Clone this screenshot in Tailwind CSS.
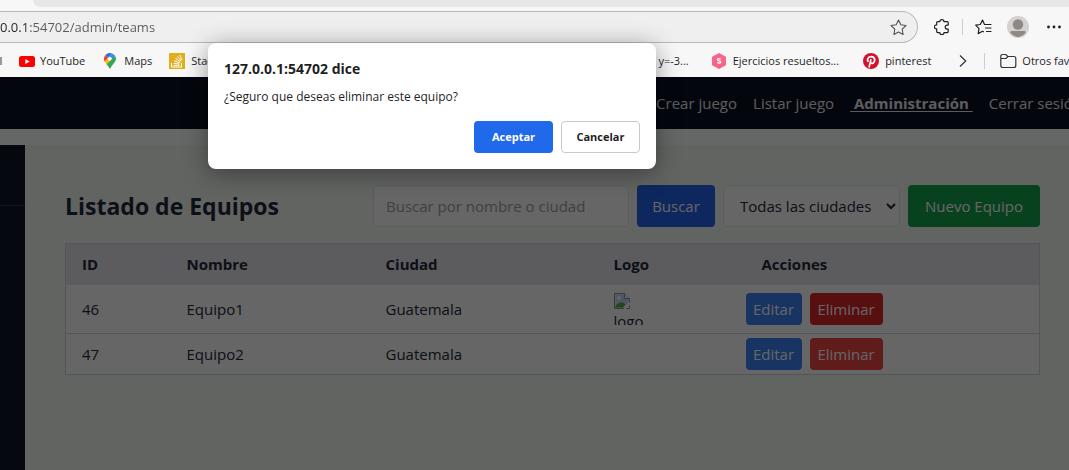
<!DOCTYPE html>
<html lang="es">
<head>
<meta charset="utf-8">
<meta name="viewport" content="width=device-width, initial-scale=1">
<title>Listado de Equipos</title>
<script src="https://cdn.jsdelivr.net/npm/@tailwindcss/browser@4"></script>
</head>
<body class="relative flex h-screen flex-col overflow-hidden bg-[#f7f7f7] font-['Open_Sans','Noto_Sans',sans-serif] text-[15px] leading-6">

<!-- Browser chrome -->
<header class="shrink-0 text-[#1f1f1f]">
  <div class="ml-[33px] h-[7px] rounded-bl-lg bg-[#e7e7e7]"></div>
  <div class="mt-1 flex h-8 items-center">
    <div class="flex h-8 grow items-center rounded-r-full border border-l-0 border-[#b9b9b9] bg-[#efefef] pr-2.5">
      <input aria-label="Dirección" value="0.0.1:54702/admin/teams" class="min-w-0 grow bg-[linear-gradient(to_right,#222_26px,#5a5a5a_26px)] bg-clip-text text-[13px] text-transparent outline-none">
      <button aria-label="Añadir a favoritos" class="text-[#555]">
        <svg class="size-[17px]" viewBox="0 0 17 17" fill="none" stroke="currentColor" stroke-width="1.1" stroke-linejoin="round"><path d="M8.5 1l2.3 4.800 5.200.7-3.800 3.700.9 5.300-4.600-2.500-4.600 2.500.9-5.300L1 6.500l5.200-.7z"/></svg>
      </button>
    </div>
    <div class="flex items-center pl-4 pr-2">
      <button aria-label="Extensiones"><svg class="size-4" viewBox="0 0 16 16" fill="none" stroke="currentColor" stroke-width="1.2" stroke-linejoin="round"><path d="M3.700 2.600h2.200a2 2 0 0 1 4 0h3.300q1 0 1 1v2.500h-1a2 2 0 0 0 0 4h1v2.500q0 1-1 1H10a2 2 0 0 1-4.200 0H3.700q-1 0-1-1v-2.700h-.3a2 2 0 0 1 0-4h.3V3.600q0-1 1-1"/></svg></button>
      <span class="ml-3 mr-3 h-4 w-px bg-[#ccc]"></span>
      <button aria-label="Favoritos"><svg class="h-4 w-[17px]" viewBox="0 0 17 16" fill="none" stroke="currentColor" stroke-width="1.2" stroke-linejoin="round" stroke-linecap="round"><path d="M10 5.500H9.500L7.500 1 5.300 5.500.7 6.200l3.300 3.400-.8 5 4.300-2.300 1 .5M10.500 5.500H16M10.500 9H16M11.500 12.500H16"/></svg></button>
      <button aria-label="Perfil" class="ml-[15px]"><svg class="size-[22px]" viewBox="0 0 22 22"><circle cx="11" cy="11" r="11" fill="#d4d1ce"/><circle cx="11" cy="8.500" r="5.200" fill="#8d8986"/><path d="M3.200 16.500q0-1.500 1.500-1.500h12.600q1.500 0 1.500 1.500A11 11 0 0 1 11 21a11 11 0 0 1-7.800-4.500" fill="#8d8986"/></svg></button>
      <button aria-label="Más opciones" class="ml-[18px]"><svg class="h-4 w-3.5" viewBox="0 0 14 16"><g fill="currentColor"><circle cx="1.500" cy="8" r="1.400"/><circle cx="7" cy="8" r="1.400"/><circle cx="12.500" cy="8" r="1.400"/></g></svg></button>
    </div>
  </div>
  <nav aria-label="Marcadores" class="flex h-[34px] items-center overflow-hidden whitespace-nowrap pt-0.5 text-[11px]">
    <span class="mr-[17px] h-2 w-0.5 bg-[#999]"></span>
    <a href="#" class="flex items-center gap-[5px]"><svg class="h-[11px] w-4" viewBox="0 0 16 11"><rect width="16" height="11" rx="2.500" fill="#f00"/><path d="M6.300 3v5l4.400-2.500z" fill="#fff"/></svg>YouTube</a>
    <a href="#" class="ml-[19px] flex items-center gap-2"><svg class="h-4 w-3" viewBox="0 0 12 16"><path d="M6 0a6 6 0 0 0-4.600 2.100L4.300 4.600 8 .4A6 6 0 0 0 6 0" fill="#1a73e8"/><path d="M1.400 2.100A6 6 0 0 0 .7 8.700L4.300 4.600z" fill="#ea4335"/><path d="M8 .4L4.300 4.600a2.200 2.200 0 0 1 3.300 2.900l3.600-4.400A6 6 0 0 0 8 .4" fill="#4285f4"/><path d="M.7 8.700L2.500 11.200l5.100-3.700A2.200 2.200 0 0 1 4.300 4.600z" fill="#fbbc04"/><path d="M2.500 11.200Q4.600 13.300 6 16q1.200-2.800 3.500-5.200Q12 8.400 12 6a6 6 0 0 0-.8-2.900z" fill="#34a853"/></svg>Maps</a>
    <a href="#" class="ml-[17px] flex items-center gap-1.5"><svg class="size-4" viewBox="0 0 16 16"><rect width="16" height="16" fill="#e3ae1b"/><path d="M2.500 10v4h10v-4M4.500 12.300h6M4.600 10.300l6 .8M5.200 7.800l5.600 2M6.400 5.300l5 3.600M8.300 3.300l3.800 4.800M10.800 2l2.200 5.400" fill="none" stroke="#fff"/></svg>Stack</a>
    <span class="grow"></span>
    <a href="#">y=-3...</a>
    <a href="#" class="ml-[22px] flex items-center gap-1.5"><svg class="size-4" viewBox="0 0 16 16"><path d="M8 1l6 3.400v7.200L8 15l-6-3.400V4.400z" fill="#f7658b" stroke="#f7658b" stroke-width="2" stroke-linejoin="round"/><path d="M9.800 6.200Q6.500 5 6.500 6.700q0 .8 1.500 1.200 1.700.4 1.700 1.300Q9.500 10.800 6.300 9.700" fill="none" stroke="#fff" stroke-width="1.300"/></svg>Ejercicios resueltos...</a>
    <a href="#" class="ml-6 flex items-center gap-1.5"><svg class="size-4" viewBox="0 0 16 16"><circle cx="8" cy="8" r="8" fill="#d1132b"/><path d="M6 14.500L8 6.300M5.200 8.800Q3.600 6 5.800 4.300 8.300 2.800 10.600 4.300q2 1.900.5 4.700-1.600 2.300-3.700.7" fill="none" stroke="#fff" stroke-width="1.700"/></svg>pinterest</a>
    <button aria-label="Más marcadores" class="ml-7"><svg class="h-3 w-2" viewBox="0 0 8 12" fill="none" stroke="#333" stroke-width="1.200"><path d="M1 .5L6.700 6 1 11.500"/></svg></button>
    <span class="ml-[17px] mr-[15px] h-4 w-px bg-[#ccc]"></span>
    <a href="#" class="-mr-[30px] flex items-center gap-[5px]"><svg class="h-4 w-[17px]" viewBox="0 0 17 16" fill="none" stroke="#333" stroke-width="1.200"><path d="M.8 12.500v-9q0-2 2-2h3l2 2h6q2 0 2 2v7q0 2-2 2h-11q-2 0-2-2M.8 5.500H6l2-2"/></svg>Otros favoritos</a>
  </nav>
</header>

<!-- Application under the modal -->
<div class="relative flex min-h-0 grow flex-col bg-[#fdfeff] text-slate-800">
  <nav aria-label="Principal" class="flex h-[52px] shrink-0 items-center justify-end gap-4 overflow-hidden whitespace-nowrap bg-[#0b1124] text-[#e5e7eb]">
    <a href="#">Crear juego</a>
    <a href="#">Listar juego</a>
    <a href="#" class="whitespace-pre font-bold underline underline-offset-2"> Administración </a>
    <a href="#" class="-mr-[13px]">Cerrar sesión</a>
  </nav>
  <div class="mt-4 flex min-h-0 grow">
    <aside class="w-[25px] shrink-0 bg-[#0d1424] pt-[60px]"><hr class="border-[#2d3748]"></aside>
    <main class="min-w-0 grow bg-[#f5f9f5] pl-10 pr-[29px] pt-10">
      <div class="mb-4 flex items-center">
        <h1 class="grow text-[23px] font-bold text-[#1e293b]">Listado de Equipos</h1>
        <form class="flex gap-2">
          <input aria-label="Buscar por nombre o ciudad" placeholder="Buscar por nombre o ciudad" class="h-[42px] w-64 rounded-sm border border-gray-200 bg-white px-3 placeholder:text-gray-400">
          <button type="button" class="h-[42px] w-[78px] rounded-sm bg-[#2563eb] text-white">Buscar</button>
          <select aria-label="Ciudad" class="h-[42px] w-[177px] rounded-sm border border-gray-200 bg-white pl-3"><option>Todas las ciudades</option></select>
          <button type="button" class="h-[42px] w-[132px] rounded-sm bg-[#16a34a] text-white">Nuevo Equipo</button>
        </form>
      </div>
      <table class="w-full table-fixed border-collapse border border-[#d1d5db] bg-white text-left">
        <thead class="bg-[#e5e5ea] text-[#1e293b]">
          <tr class="h-[41px]">
            <th class="w-[105px] px-4">ID</th>
            <th class="w-[199px] px-4">Nombre</th>
            <th class="w-[228px] px-4">Ciudad</th>
            <th class="w-[148px] px-4">Logo</th>
            <th class="px-4">Acciones</th>
          </tr>
        </thead>
        <tbody>
          <tr class="h-[49px] border-b border-[#d1d5db]">
            <td class="px-4">46</td>
            <td class="px-4">Equipo1</td>
            <td class="px-4">Guatemala</td>
            <td class="px-4">
              <div class="h-8 w-8 overflow-hidden">
                <svg class="block size-4" viewBox="0 0 16 16"><path d="M.5.500h10l5 5v10H.5z" fill="#fff" stroke="#8b9198"/><path d="M1.500 1.500h8.500v4.500h4.500v3L9 14.500H1.500z" fill="#c3d7f5"/><circle cx="5" cy="5" r="2" fill="#fff"/><path d="M1.500 14.500V13Q5 9 8 9.500q2.500.5 3.500 2L8.800 14.500z" fill="#4fae3c"/><path d="M10.500.5v5h5" fill="#fff" stroke="#8b9198"/><path d="M16 9l-6.500 7H12l4-4z" fill="#fff"/></svg>
                <span class="block leading-6">logo</span>
              </div>
            </td>
            <td><div class="flex gap-2"><button class="h-8 w-14 rounded-sm bg-[#3b82f6] text-white">Editar</button><button class="h-8 w-[73px] rounded-sm bg-[#dc2626] text-white">Eliminar</button></div></td>
          </tr>
          <tr class="h-[41px]">
            <td class="px-4">47</td>
            <td class="px-4">Equipo2</td>
            <td class="px-4">Guatemala</td>
            <td></td>
            <td><div class="flex gap-2"><button class="h-8 w-14 rounded-sm bg-[#3b82f6] text-white">Editar</button><button class="h-8 w-[73px] rounded-sm bg-[#ef4444] text-white">Eliminar</button></div></td>
          </tr>
        </tbody>
      </table>
    </main>
  </div>
  <div class="absolute inset-0 bg-black/60"></div>
</div>

<!-- Confirmation dialog -->
<div role="dialog" aria-modal="true" aria-labelledby="dlg-title" class="absolute left-[208px] top-[43px] w-[448px] rounded-lg bg-white p-4 text-[#1f1f1f] shadow-[0_4px_24px_rgba(0,0,0,0.4)]">
  <h2 id="dlg-title" class="text-sm font-bold leading-5">127.0.0.1:54702 dice</h2>
  <p class="mt-2 text-xs leading-5">¿Seguro que deseas eliminar este equipo?</p>
  <div class="mt-3.5 flex justify-end gap-2 text-[11px] font-bold">
    <button class="h-8 w-[79px] rounded-sm bg-[#2169eb] text-white">Aceptar</button>
    <button class="h-8 w-[79px] rounded-sm border border-[#c9c9c9] bg-white">Cancelar</button>
  </div>
</div>
</body>
</html>
